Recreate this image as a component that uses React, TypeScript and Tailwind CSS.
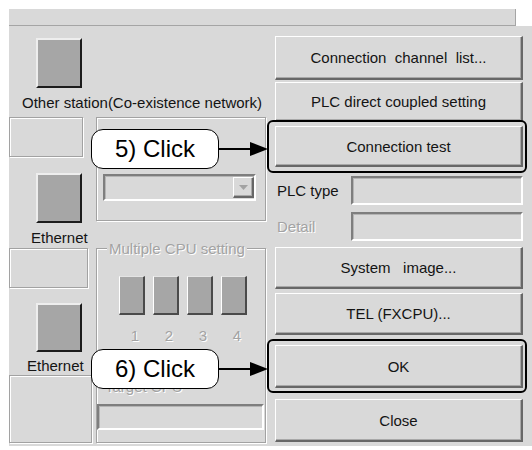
import React from 'react';

// etched group frame (dark line + white line)
const etched = 'border border-[#a2a2a2] shadow-[inset_1px_1px_0_#fff,1px_1px_0_#fff]';
const raised =
  'border-t border-l border-t-white border-l-white border-r-2 border-b-2 border-r-[#676767] border-b-[#676767] shadow-[inset_-1px_-1px_0_#a8a8a8]';
const sunken =
  'border-2 border-t-[#7e7e7e] border-l-[#7e7e7e] border-r-white border-b-white shadow-[inset_1px_1px_0_#b4b4b4]';
const disabledText = 'text-[#a3a3a3] [text-shadow:1px_1px_0_#fff]';

const StationIcon: React.FC<{ className?: string }> = ({ className = '' }) => (
  <div
    className={`w-[46px] bg-[#a6a6a6] border-t-2 border-l-2 border-t-[#eeeeee] border-l-[#eeeeee] border-r-2 border-b-2 border-r-[#1c1c1c] border-b-[#1c1c1c] ${className}`}
  />
);

const Button: React.FC<{ label: string; className?: string }> = ({ label, className = '' }) => (
  <div className={`flex items-center justify-center whitespace-pre bg-[#d9d9d9] ${raised} ${className}`}>
    {label}
  </div>
);

const Callout: React.FC<{ text: string; top: string; arrowTop: string }> = ({ text, top, arrowTop }) => (
  <>
    <div
      className={`absolute left-[91px] ${top} w-[128px] h-[40px] bg-white border-[1.5px] border-black rounded-[12px] flex items-center justify-center text-[24px] leading-none text-black`}
    >
      {text}
    </div>
    <svg className={`absolute left-[219px] ${arrowTop}`} width="50" height="16" viewBox="0 0 50 16">
      <line x1="0" y1="8" x2="34" y2="8" stroke="#000" strokeWidth="2" />
      <polygon points="31,1 49,8 31,15" fill="#000" />
    </svg>
  </>
);

export default function App() {
  return (
    <div className="relative w-[532px] h-[450px] bg-white overflow-hidden font-['Liberation_Sans',Arial,sans-serif] text-[15px] leading-[17px] text-[#141414]">
      <div className="pl-[9px] pt-[9px]">
        {/* top strip, end of the group above */}
        <div className="h-[17px] w-[507px] bg-[#d9d9d9] border-b border-r border-[#a5a5a5] shadow-[1px_1px_0_#fff]" />

        <div className="flex h-[420px] w-[523px] bg-[#d9d9d9]">
          {/* left + middle */}
          <div className="w-[257px] flex flex-col">
            <StationIcon className="mt-[12px] ml-[27px] h-[50px]" />
            <div className="mt-[6px] ml-[13px] whitespace-nowrap">Other station(Co-existence network)</div>

            <div className="mt-[6px] flex">
              {/* left column */}
              <div className="w-[83px] flex flex-col">
                <div className={`w-[74px] h-[40px] ${etched}`} />
                <StationIcon className="mt-[16px] ml-[27px] h-[50px]" />
                <div className="mt-[6px] ml-[22px]">Ethernet</div>
                <div className={`mt-[2px] w-[79px] h-[40px] ${etched}`} />
                <StationIcon className="mt-[15px] ml-[27px] h-[49px]" />
                <div className="mt-[5px] ml-[18px]">Ethernet</div>
                <div className={`mt-[1px] w-[83px] h-[68px] ${etched}`} />
              </div>

              {/* middle column */}
              <div className="ml-[4px] w-[170px] flex flex-col">
                <div className={`h-[104px] pt-[56px] pl-[6px] ${etched}`}>
                  <div className={`w-[153px] h-[27px] flex justify-end items-center ${sunken}`}>
                    <div className={`w-[21px] h-[21px] flex items-center justify-center bg-[#d9d9d9] ${raised}`}>
                      <svg width="9" height="5" viewBox="0 0 9 5">
                        <polygon points="0,0 9,0 4.5,5" fill="#a3a3a3" />
                      </svg>
                    </div>
                  </div>
                </div>

                <div className={`mt-[27px] h-[195px] flex flex-col ${etched}`}>
                  <span className={`-mt-[9px] ml-[10px] px-[2px] w-fit bg-[#d9d9d9] whitespace-nowrap ${disabledText}`}>
                    Multiple CPU setting
                  </span>
                  <div className="mt-[19px] pl-[22px] flex gap-[8px]">
                    {[1, 2, 3, 4].map((n) => (
                      <div
                        key={n}
                        className="w-[26px] h-[39px] bg-[#a6a6a6] border-l border-t border-l-white border-t-[#e4e4e4] border-r-2 border-b-2 border-r-[#4a4a4a] border-b-[#4a4a4a]"
                      />
                    ))}
                  </div>
                  <div className="mt-[12px] pl-[25px] flex gap-[8px]">
                    {[1, 2, 3, 4].map((n) => (
                      <div key={n} className={`w-[26px] text-center ${disabledText}`}>
                        {n}
                      </div>
                    ))}
                  </div>
                  <div className={`mt-[34px] pl-[8px] ${disabledText}`}>Target CPU</div>
                  <div className={`mt-[9px] w-[167px] h-[26px] ${sunken}`} />
                </div>
              </div>
            </div>
          </div>

          {/* right column */}
          <div className="ml-[9px] w-[248px] flex flex-col">
            <Button label="Connection  channel  list..." className="mt-[10px] h-[44px]" />
            <Button label="PLC direct coupled setting" className="mt-[2px] h-[40px]" />
            <Button label="Connection test" className="mt-[4px] h-[41px]" />
            <div className="mt-[9px] h-[29px] flex items-center">
              <div className="w-[76px] pl-[2px]">PLC type</div>
              <div className={`flex-1 h-full ${sunken}`} />
            </div>
            <div className="mt-[7px] h-[29px] flex items-center">
              <div className={`w-[76px] pl-[2px] ${disabledText}`}>Detail</div>
              <div className={`flex-1 h-full ${sunken}`} />
            </div>
            <Button label="System   image..." className="mt-[6px] h-[42px]" />
            <Button label="TEL (FXCPU)..." className="mt-[4px] h-[42px]" />
            <Button label="OK" className="mt-[10px] h-[43px]" />
            <Button label="Close" className="mt-[11px] h-[43px]" />
          </div>
        </div>
      </div>

      {/* highlight frames around the buttons to click */}
      <div className="absolute left-[267px] top-[120px] w-[260px] h-[53px] border-2 border-black rounded-[6px]" />
      <div className="absolute left-[267px] top-[339px] w-[260px] h-[54px] border-2 border-black rounded-[6px]" />

      <Callout text="5) Click" top="top-[129px]" arrowTop="top-[141px]" />
      <Callout text="6) Click" top="top-[349px]" arrowTop="top-[361px]" />
    </div>
  );
}
